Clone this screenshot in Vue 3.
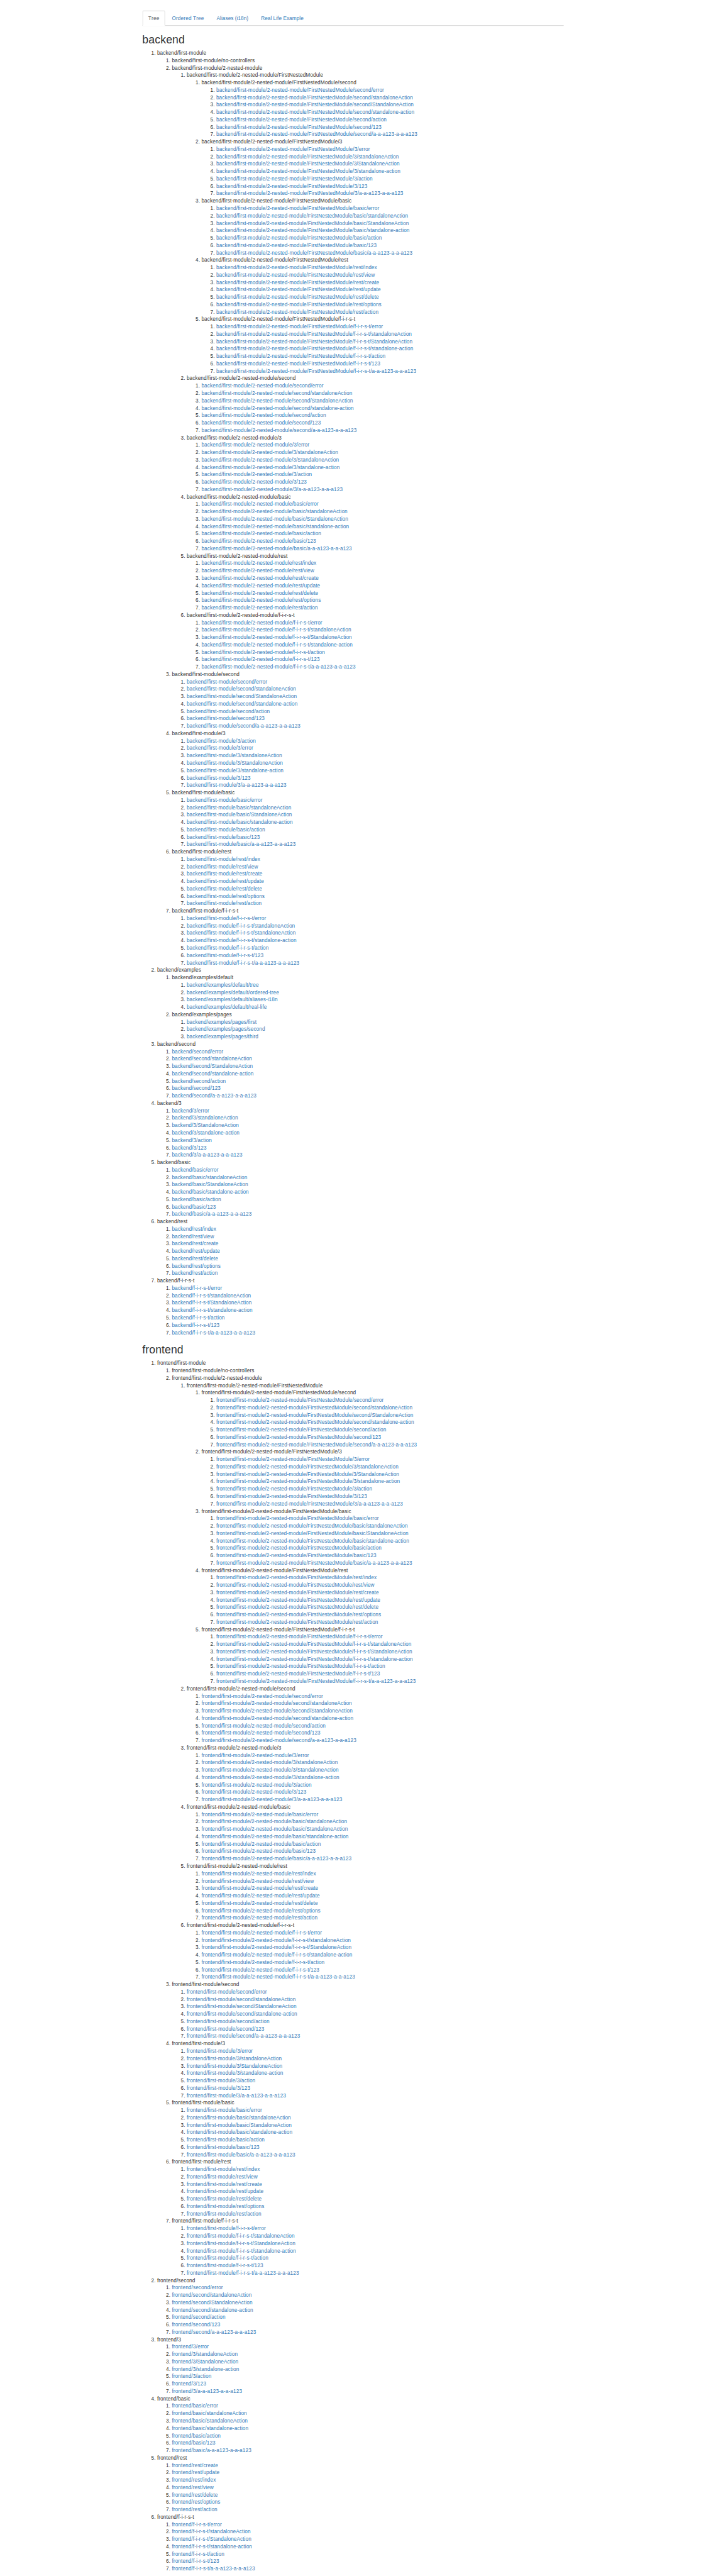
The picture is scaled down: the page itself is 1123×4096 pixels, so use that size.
<script setup>
import { h } from 'vue'

const tabs = ['Tree', 'Ordered Tree', 'Aliases (i18n)', 'Real Life Example']

const common = ['error', 'standaloneAction', 'StandaloneAction', 'standalone-action', 'action', '123', 'a-a-a123-a-a-a123']
const actionFirst = ['action', ...common.filter((name) => name !== 'action')]
const rest = ['index', 'view', 'create', 'update', 'delete', 'options', 'action']
const restCreateFirst = ['create', 'update', 'index', 'view', 'delete', 'options', 'action']

// A node is [name, children]; a plain string is an action link.
const controllers = (three = common, restActions = rest) => [
  ['second', common],
  ['3', three],
  ['basic', common],
  ['rest', restActions],
  ['f-i-r-s-t', common],
]

const firstModule = (three) => ['first-module', [
  ['no-controllers', []],
  ['2-nested-module', [['FirstNestedModule', controllers()], ...controllers()]],
  ...controllers(three),
]]

const examples = ['examples', [
  ['default', ['tree', 'ordered-tree', 'aliases-i18n', 'real-life']],
  ['pages', ['first', 'second', 'third']],
]]

const applications = [
  { name: 'backend', nodes: [firstModule(actionFirst), examples, ...controllers()] },
  { name: 'frontend', nodes: [firstModule(common), ...controllers(common, restCreateFirst)] },
]

// Advance widths in em, grouped by glyph class.
const advances = {
  0.222: 'ijl',
  0.278: '/ft.I ',
  0.333: '-r()',
  0.5: 'cksvxyz',
  0.611: 'FT',
  0.667: 'AESP',
  0.722: 'NRw',
  0.778: 'O',
  0.833: 'mM',
}
const advanceOf = (char) => {
  const hit = Object.entries(advances).find(([, chars]) => chars.includes(char))
  return hit ? Number(hit[0]) : 0.556
}

// Tracking that brings a text to the width it has on whole-pixel advances.
const tracking = (text, size = 14) => {
  const chars = [...text]
  const extra = chars.reduce((sum, char) => {
    const width = advanceOf(char) * size
    return sum + Math.round(width) - width
  }, 0)
  return { letterSpacing: `${(extra / chars.length).toFixed(4)}px` }
}

const RouteTree = ({ nodes, path }) =>
  h('ol', nodes.map((node) => {
    if (typeof node === 'string') {
      const route = `${path}/${node}`
      return h('li', [h('a', { href: `#${route}`, style: tracking(route) }, route)])
    }
    const [name, children] = node
    const route = `${path}/${name}`
    return h('li', [
      h('span', { style: tracking(route) }, route),
      children.length ? h(RouteTree, { nodes: children, path: route }) : null,
    ])
  }))
RouteTree.props = ['nodes', 'path']
</script>

<template>
  <div class="viewport">
    <div class="page">
      <main class="container">
        <ul class="tabs">
          <li v-for="(tab, i) in tabs" :key="tab" :class="{ active: i === 0 }">
            <a href="#" :style="tracking(tab)">{{ tab }}</a>
          </li>
        </ul>
        <section v-for="app in applications" :key="app.name" class="application">
          <h2 :style="tracking(app.name, 30)">{{ app.name }}</h2>
          <RouteTree :nodes="app.nodes" :path="app.name" />
        </section>
      </main>
    </div>
  </div>
</template>

<style>
body {
  margin: 0;
  background: #fff;
}
</style>

<style scoped>
.viewport {
  width: 1123px;
  height: 4096px;
  overflow: hidden;
}
.page {
  width: 1910px;
  height: 6966px;
  transform: scale(0.58796, 0.588);
  transform-origin: 0 0;
  font-family: "Liberation Sans", Arial, sans-serif;
  font-size: 14px;
  line-height: 20px;
  font-kerning: none;
  font-feature-settings: "liga" 1;
  color: #333;
}
.container {
  box-sizing: border-box;
  width: 1170px;
  margin: 0 auto;
  padding: 28px 15px 0;
}
.tabs {
  display: flex;
  height: 40px;
  margin: 0;
  padding: 0;
  list-style: none;
  border-bottom: 2px solid #ddd;
}
.tabs li {
  height: 42px;
  margin-right: 2px;
}
.tabs a {
  display: block;
  padding: 9px 14px;
  border: 2px solid transparent;
  border-radius: 4px 4px 0 0;
}
.tabs .active a {
  background: #fff;
  border-color: #ddd;
  border-bottom-color: #fff;
}
.page :deep(a) {
  color: #337ab7;
  text-decoration: none;
}
.page .tabs .active a {
  color: #555;
}
h2 {
  margin: 20px 0 10px;
  font-size: 30px;
  font-weight: 500;
  line-height: 33px;
}
.application :deep(ol) {
  margin: 0;
  padding-left: 40px;
  letter-spacing: 0.14px;
}
.application > :deep(ol) {
  margin-bottom: 10px;
}
</style>
